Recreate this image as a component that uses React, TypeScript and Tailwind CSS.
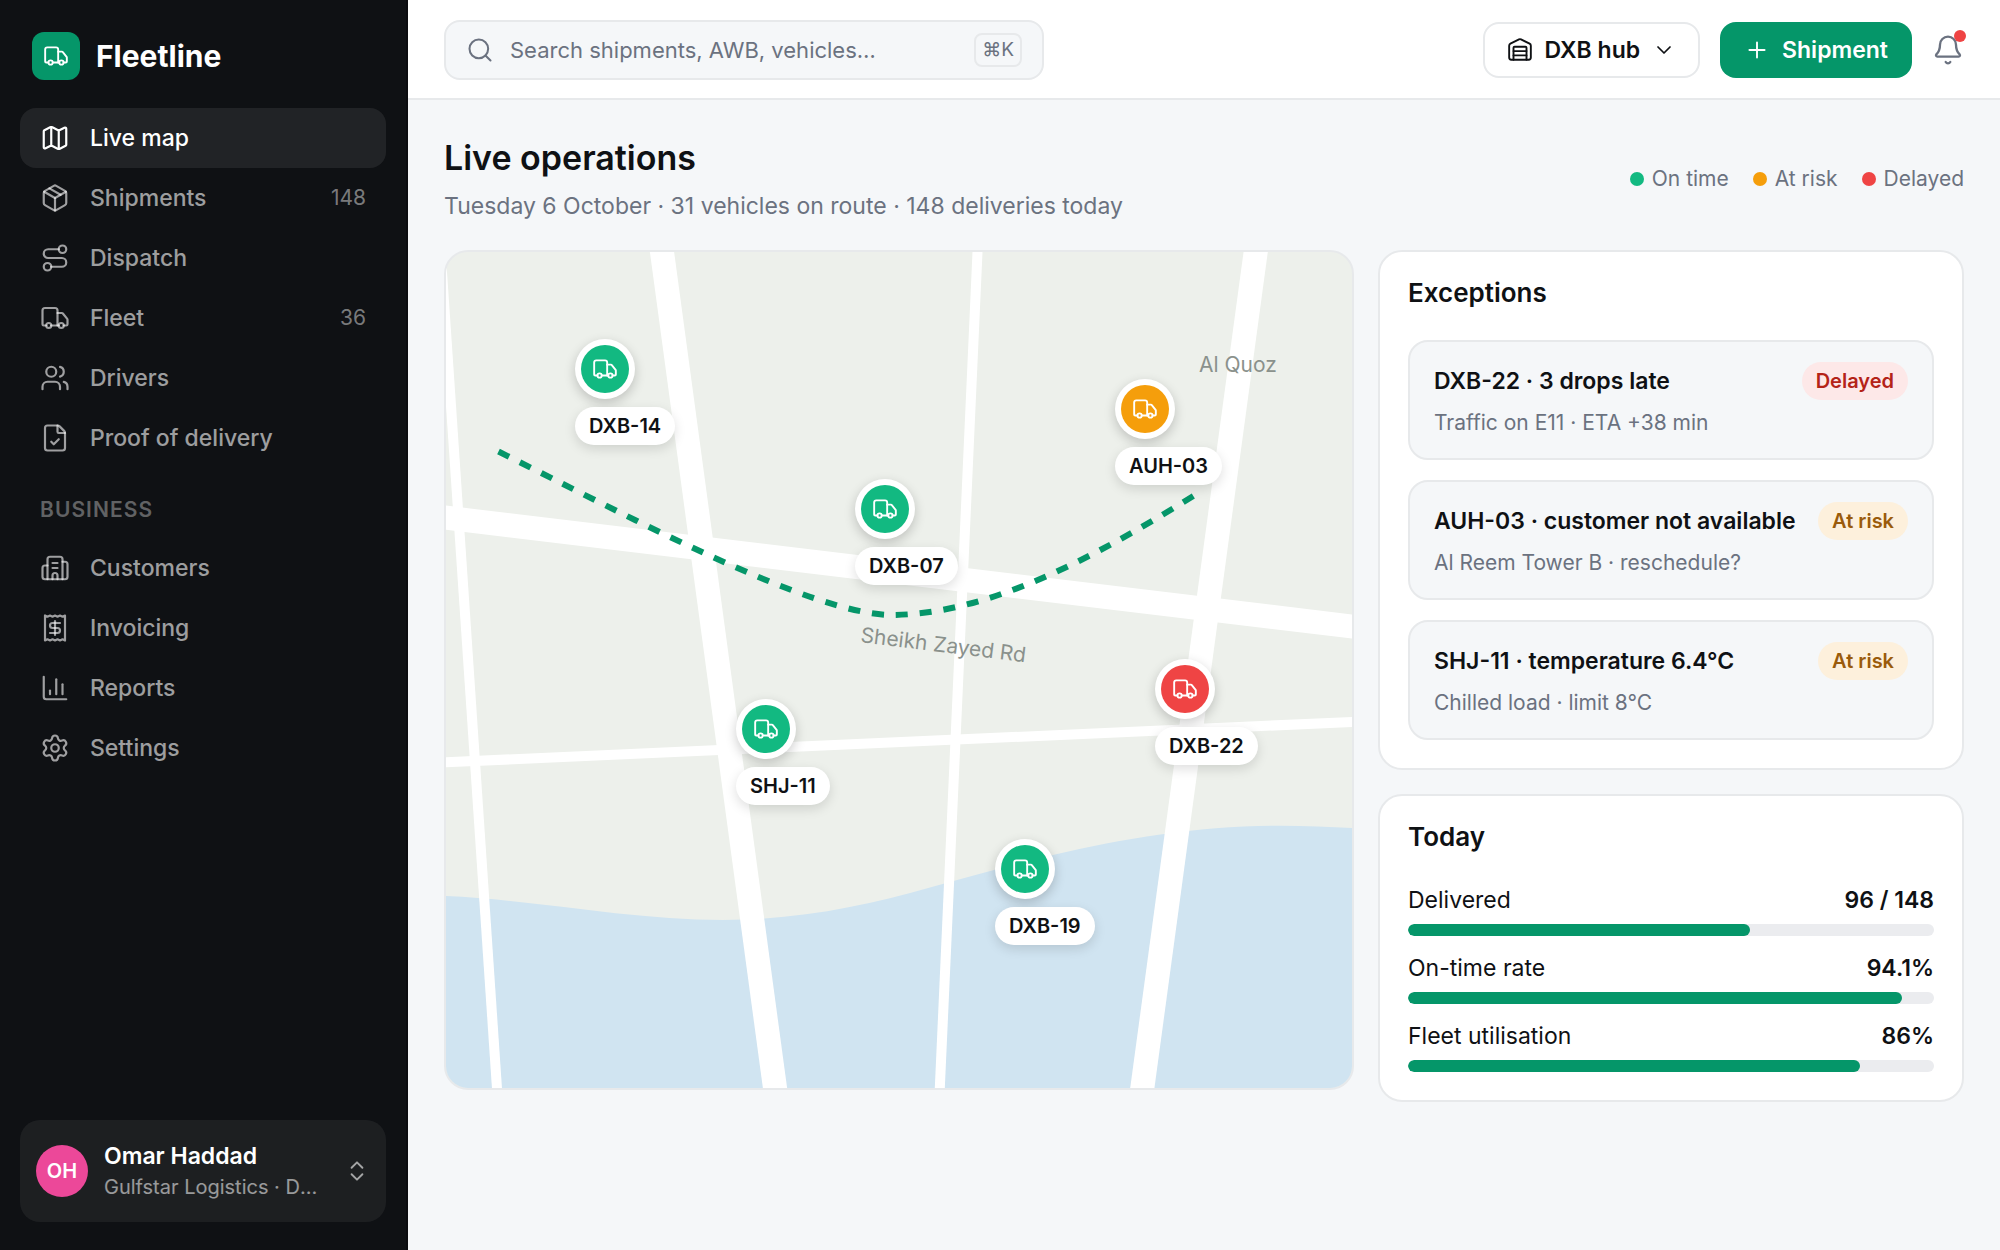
import {
  Bell,
  Building2,
  ChartColumn,
  ChevronDown,
  ChevronsUpDown,
  FileCheck,
  Map as MapIcon,
  Package,
  Plus,
  Receipt,
  Route,
  Search,
  Settings,
  Truck,
  Users,
  Warehouse,
  type LucideIcon,
} from "lucide-react";

type NavEntry = { label: string; icon: LucideIcon; count?: number; active?: boolean };

const operationsNav: NavEntry[] = [
  { label: "Live map", icon: MapIcon, active: true },
  { label: "Shipments", icon: Package, count: 148 },
  { label: "Dispatch", icon: Route },
  { label: "Fleet", icon: Truck, count: 36 },
  { label: "Drivers", icon: Users },
  { label: "Proof of delivery", icon: FileCheck },
];

const businessNav: NavEntry[] = [
  { label: "Customers", icon: Building2 },
  { label: "Invoicing", icon: Receipt },
  { label: "Reports", icon: ChartColumn },
  { label: "Settings", icon: Settings },
];

type Status = "ontime" | "risk" | "delayed";

const statusFill: Record<Status, string> = {
  ontime: "bg-[#12b981]",
  risk: "bg-[#f59e0b]",
  delayed: "bg-[#ef4444]",
};

const statusBadge: Record<Status, string> = {
  ontime: "bg-emerald-100 text-emerald-800",
  risk: "bg-[#fdf0dc] text-[#9a5b0b]",
  delayed: "bg-[#fde8e8] text-[#b42318]",
};

const statusLabel: Record<Status, string> = {
  ontime: "On time",
  risk: "At risk",
  delayed: "Delayed",
};

const MAP_WIDTH = 906;
const MAP_HEIGHT = 836;

// Pin positions in map units.
const vehicles: { id: string; status: Status; x: number; y: number }[] = [
  { id: "DXB-14", status: "ontime", x: 129, y: 87 },
  { id: "AUH-03", status: "risk", x: 669, y: 127 },
  { id: "DXB-07", status: "ontime", x: 409, y: 227 },
  { id: "DXB-22", status: "delayed", x: 709, y: 407 },
  { id: "SHJ-11", status: "ontime", x: 290, y: 447 },
  { id: "DXB-19", status: "ontime", x: 549, y: 587 },
];

const exceptions: { title: string; detail: string; status: Status }[] = [
  { title: "DXB-22 · 3 drops late", detail: "Traffic on E11 · ETA +38 min", status: "delayed" },
  { title: "AUH-03 · customer not available", detail: "Al Reem Tower B · reschedule?", status: "risk" },
  { title: "SHJ-11 · temperature 6.4°C", detail: "Chilled load · limit 8°C", status: "risk" },
];

const metrics = [
  { label: "Delivered", value: "96 / 148", percent: 65 },
  { label: "On-time rate", value: "94.1%", percent: 94 },
  { label: "Fleet utilisation", value: "86%", percent: 86 },
];

function NavItem({ label, icon: Icon, count, active }: NavEntry) {
  return (
    <li>
      <a
        href="#"
        aria-current={active ? "page" : undefined}
        className={
          active
            ? "flex h-[60px] items-center gap-5 rounded-2xl bg-white/8 px-5 font-medium text-white"
            : "flex h-[60px] items-center gap-5 rounded-2xl px-5 font-medium text-white/60"
        }
      >
        <Icon size={30} strokeWidth={1.75} className="shrink-0" />
        <span className="grow">{label}</span>
        {count !== undefined && <span className="text-[21px] font-normal text-white/45">{count}</span>}
      </a>
    </li>
  );
}

function Sidebar() {
  return (
    <aside className="flex w-[408px] shrink-0 flex-col border-r-2 border-[#0b0c0f] bg-[#0f1114] px-5 pt-8 pb-7 text-[23px]">
      <div className="mb-7 flex items-center gap-4 px-3">
        <span className="flex size-12 items-center justify-center rounded-xl bg-[#059669] text-white">
          <Truck size={26} strokeWidth={1.75} />
        </span>
        <span className="text-[30px] leading-[48px] font-bold text-white">Fleetline</span>
      </div>
      <nav aria-label="Main">
        <ul>
          {operationsNav.map((entry) => (
            <NavItem key={entry.label} {...entry} />
          ))}
        </ul>
        <h2 className="mt-7 mb-3.5 px-5 text-[21px] leading-7 font-semibold tracking-wider text-white/35">BUSINESS</h2>
        <ul>
          {businessNav.map((entry) => (
            <NavItem key={entry.label} {...entry} />
          ))}
        </ul>
      </nav>
      <button type="button" className="mt-auto flex items-center gap-4 rounded-[20px] bg-white/6 px-4 py-5 text-left">
        <span className="flex size-[52px] shrink-0 items-center justify-center rounded-full bg-[#ec4899] text-xl font-semibold text-white">
          OH
        </span>
        <span className="min-w-0 grow">
          <span className="block truncate leading-8 font-semibold text-white">Omar Haddad</span>
          <span className="block truncate text-xl leading-[30px] text-white/55">Gulfstar Logistics · Dubai</span>
        </span>
        <ChevronsUpDown size={26} strokeWidth={1.75} className="ml-1 shrink-0 text-white/60" />
      </button>
    </aside>
  );
}

function TopBar() {
  return (
    <header className="flex h-[100px] items-center gap-5 border-b-2 border-[#e7e9eb] bg-white px-9 pt-0.5">
      <label className="flex h-[60px] w-[600px] items-center gap-4 rounded-2xl border-2 border-[#e7e9eb] bg-[#f5f7f9] px-5 text-[#6b7280]">
        <Search size={28} strokeWidth={1.75} className="shrink-0" />
        <input
          type="search"
          aria-label="Search"
          placeholder="Search shipments, AWB, vehicles…"
          className="min-w-0 grow bg-transparent text-[22px] outline-none placeholder:text-[#6b7280]"
        />
        <kbd className="flex h-[34px] items-center rounded-lg border-2 border-[#e7e9eb] px-1.5 font-[Inter,'DejaVu_Sans',sans-serif] text-[19px]">
          ⌘K
        </kbd>
      </label>
      <div className="ml-auto flex items-center gap-5">
        <div className="relative flex h-14 items-center rounded-2xl border-2 border-[#e7e9eb] bg-white text-[23px] font-semibold">
          <Warehouse size={26} strokeWidth={1.75} className="pointer-events-none absolute left-[22px]" />
          <select
            aria-label="Hub"
            className="h-full appearance-none rounded-2xl bg-transparent pr-[58px] pl-[60px] field-sizing-content"
          >
            <option>DXB hub</option>
          </select>
          <ChevronDown size={24} strokeWidth={1.75} className="pointer-events-none absolute right-[22px]" />
        </div>
        <button
          type="button"
          className="flex h-14 items-center gap-3 rounded-2xl bg-[#059669] px-6 text-[23px] font-semibold text-white"
        >
          <Plus size={26} strokeWidth={1.75} />
          Shipment
        </button>
        <button type="button" aria-label="Notifications" className="relative text-[#6b7280]">
          <Bell size={32} strokeWidth={1.75} />
          <span className="absolute -top-1 -right-0.5 size-3 rounded-full bg-[#ef4444]" />
        </button>
      </div>
    </header>
  );
}

function LiveMap() {
  return (
    <section
      aria-label="Live map"
      className="relative aspect-[13/12] overflow-hidden rounded-3xl border-2 border-[#e7e9eb] bg-[#edf0eb]"
    >
      <svg
        viewBox="0 0 906 836"
        preserveAspectRatio="xMidYMid slice"
        className="absolute inset-0 size-full"
        fill="none"
        aria-hidden="true"
      >
        <path
          d="M0 644C92 648 185 668 277 668C350 668 420 654 484 635.5C524 624 566 613 607 603C680 586 755 573.7 834 573.7C860 573.7 884 575 906 576V836H0Z"
          fill="#d0e4f1"
        />
        <g stroke="#fff" strokeWidth="24">
          <path d="M213.3 -20L331.7 856" />
          <path d="M-20 263.3L926 376.9" />
          <path d="M812.4 -20L693.6 856" />
        </g>
        <g stroke="#fff" strokeWidth="10">
          <path d="M532.4 -20L492.9 856" />
          <path d="M-6.7 -20L52.3 856" />
          <path d="M-20 511.1L926 469.1" />
        </g>
        <path
          d="M52.5 199.5C180 263 362 361 444 363C544 363 654 302 749 243"
          stroke="#059669"
          strokeWidth="6"
          strokeDasharray="12 12"
        />
        <g fill="#8a918c" fontSize="21">
          <text x="753" y="120">Al Quoz</text>
          <text x="414" y="390" transform="rotate(7 414 390)">Sheikh Zayed Rd</text>
        </g>
      </svg>
      {vehicles.map(({ id, status, x, y }) => (
        <div
          key={id}
          className="absolute flex flex-col items-start gap-2"
          style={{ left: `${(x / MAP_WIDTH) * 100}%`, top: `${(y / MAP_HEIGHT) * 100}%` }}
        >
          <span className="rounded-full bg-white p-1.5 shadow-[0_4px_12px_rgba(0,0,0,0.2)]">
            <span className={`flex size-12 items-center justify-center rounded-full text-white ${statusFill[status]}`}>
              <Truck size={26} strokeWidth={1.75} />
            </span>
          </span>
          <span className="rounded-full bg-white px-3.5 text-xl leading-[38px] font-semibold whitespace-nowrap shadow-[0_4px_12px_rgba(0,0,0,0.13)]">
            {id}
          </span>
        </div>
      ))}
    </section>
  );
}

function Card({ title, children }: { title: string; children: React.ReactNode }) {
  return (
    <section className="rounded-3xl border-2 border-[#e7e9eb] bg-white p-7">
      <h2 className="mb-[34px] text-[26px] leading-[26px] font-semibold">{title}</h2>
      {children}
    </section>
  );
}

function Exceptions() {
  return (
    <Card title="Exceptions">
      <ul className="flex flex-col gap-5">
        {exceptions.map(({ title, detail, status }) => (
          <li key={title} className="rounded-[20px] border-2 border-[#e7e9eb] bg-[#f5f7f9] px-6 py-5">
            <div className="flex items-center justify-between gap-3">
              <h3 className="truncate text-[23px] leading-[38px] font-semibold">{title}</h3>
              <span
                className={`shrink-0 rounded-full px-3.5 text-xl leading-[38px] font-semibold ${statusBadge[status]}`}
              >
                {statusLabel[status]}
              </span>
            </div>
            <p className="mt-2 text-[21px] leading-[30px] text-[#6b7280]">{detail}</p>
          </li>
        ))}
      </ul>
    </Card>
  );
}

function Today() {
  return (
    <Card title="Today">
      <dl className="flex flex-col gap-4">
        {metrics.map(({ label, value, percent }) => (
          <div key={label} className="grid grid-cols-[1fr_auto] gap-y-2 text-[23px] leading-8">
            <dt>{label}</dt>
            <dd className="font-semibold">{value}</dd>
            <dd className="col-span-2 h-3 overflow-hidden rounded-full bg-[#ebecef]">
              <div className="h-full rounded-full bg-[#059669]" style={{ width: `${percent}%` }} />
            </dd>
          </div>
        ))}
      </dl>
    </Card>
  );
}

export default function App() {
  return (
    <div className="flex min-h-screen bg-[#f5f7f9] font-[Inter,'Liberation_Sans',sans-serif] text-[#0f1114]">
      <Sidebar />
      <div className="min-w-0 grow">
        <TopBar />
        <main className="p-9">
          <div className="mb-7 flex items-center justify-between gap-6">
            <div>
              <h1 className="text-[34px] leading-[44px] font-semibold">Live operations</h1>
              <p className="mt-2.5 text-[23px] leading-8 text-[#6b7280]">
                Tuesday 6 October · 31 vehicles on route · 148 deliveries today
              </p>
            </div>
            <ul className="flex gap-6 text-[21px] leading-7 text-[#6b7280]">
              {(["ontime", "risk", "delayed"] as Status[]).map((status) => (
                <li key={status} className="flex items-center gap-2">
                  <span className={`size-3.5 rounded-full ${statusFill[status]}`} />
                  {statusLabel[status]}
                </li>
              ))}
            </ul>
          </div>
          <div className="grid grid-cols-[455fr_293fr] items-start gap-6">
            <LiveMap />
            <div className="flex min-w-0 flex-col gap-6">
              <Exceptions />
              <Today />
            </div>
          </div>
        </main>
      </div>
    </div>
  );
}
